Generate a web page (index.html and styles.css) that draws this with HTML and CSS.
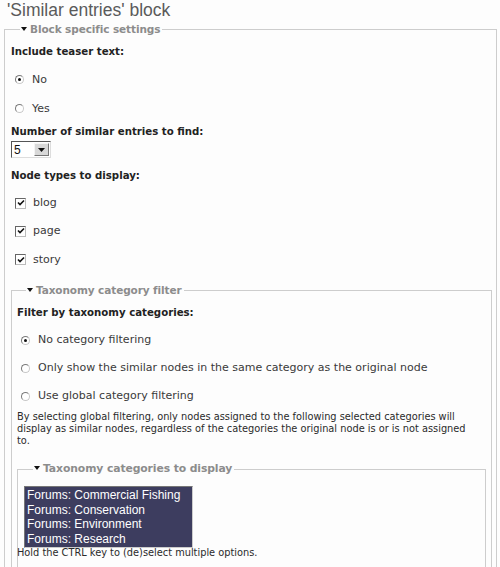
FILE: index.html
```html
<!DOCTYPE html>
<html>
<head>
<meta charset="utf-8">
<link rel="stylesheet" href="styles.css">
</head>
<body>
<h2 class="title">'Similar entries' block</h2>
<fieldset class="fs fs-outer">
  <legend class="lg"><svg class="tri" width="6" height="4" viewBox="0 0 6 4"><path d="M0 0H6L3 4Z" fill="#111"/></svg>Block specific settings</legend>
  <div class="label mt9">Include teaser text:</div>
  <div class="opts mt6">
    <div class="opt opt-tall"><span class="radio on"></span>No</div>
    <div class="opt opt-tall"><span class="radio"></span>Yes</div>
  </div>
  <div class="label mt2">Number of similar entries to find:</div>
  <div class="select mt2"><span class="sel-val">5</span><span class="sel-btn"><svg width="7" height="4" viewBox="0 0 7 4"><path d="M0 0H7L3.5 4Z" fill="#111"/></svg></span></div>
  <div class="label mt11">Node types to display:</div>
  <div class="opts mt6">
    <div class="opt"><span class="check"><svg width="8" height="8" viewBox="0 0 8 8"><path d="M1 3.5L3 5.5L7 1.5" fill="none" stroke="#111" stroke-width="1.6"/></svg></span>blog</div>
    <div class="opt"><span class="check"><svg width="8" height="8" viewBox="0 0 8 8"><path d="M1 3.5L3 5.5L7 1.5" fill="none" stroke="#111" stroke-width="1.6"/></svg></span>page</div>
    <div class="opt opt-tall"><span class="check"><svg width="8" height="8" viewBox="0 0 8 8"><path d="M1 3.5L3 5.5L7 1.5" fill="none" stroke="#111" stroke-width="1.6"/></svg></span>story</div>
  </div>

  <fieldset class="fs fs-inner">
    <legend class="lg"><svg class="tri" width="6" height="4" viewBox="0 0 6 4"><path d="M0 0H6L3 4Z" fill="#111"/></svg>Taxonomy category filter</legend>
    <div class="label mt9">Filter by taxonomy categories:</div>
    <div class="opts mt6">
      <div class="opt"><span class="radio on"></span>No category filtering</div>
      <div class="opt"><span class="radio"></span>Only show the similar nodes in the same category as the original node</div>
      <div class="opt"><span class="radio"></span>Use global category filtering</div>
    </div>
    <div class="desc">By selecting global filtering, only nodes assigned to the following selected categories will display as similar nodes, regardless of the categories the original node is or is not assigned to.</div>

    <fieldset class="fs fs-third">
      <legend class="lg lg-big"><svg class="tri" width="6" height="4" viewBox="0 0 6 4"><path d="M0 0H6L3 4Z" fill="#111"/></svg>Taxonomy categories to display</legend>
      <div class="listbox">
        <div class="lb-opt">Forums: Commercial Fishing</div>
        <div class="lb-opt">Forums: Conservation</div>
        <div class="lb-opt">Forums: Environment</div>
        <div class="lb-opt">Forums: Research</div>
      </div>
      <div class="hint">Hold the CTRL key to (de)select multiple options.</div>
    </fieldset>
  </fieldset>
</fieldset>
</body>
</html>
```
FILE: styles.css
```css
html, body {
  height: 567px;
  overflow: hidden;
}
body {
  margin: 0;
  padding: 0 3px 0 4px;
  background: #fdfdfd;
  font-family: "DejaVu Sans", Verdana, sans-serif;
  font-size: 10px;
  color: #333;
}
.title {
  margin: 0 0 2px 3px;
  font-family: "Liberation Sans", Arial, sans-serif;
  font-weight: normal;
  font-size: 17.5px;
  line-height: 20px;
  color: #5a5a5a;
}
.fs {
  margin: 0;
  border: 1px solid #cdcdcd;
  min-width: 0;
}
.fs-outer {
  padding: 0 4px 40px 6px;
}
.fs-inner {
  margin-top: 9px;
  padding: 0 5px 40px 5px;
}
.fs-third {
  margin-top: 15px;
  padding: 0 6px 40px 6px;
}
.lg {
  margin-left: 9px;
  padding: 0 2px 0 1px;
  font-weight: bold;
  font-size: 10.5px;
  line-height: 14px;
  color: #8c8c8c;
  letter-spacing: -0.1px;
}
.lg-big {
  font-size: 10.8px;
}
.tri {
  display: inline-block;
  margin-right: 3px;
  vertical-align: 2px;
}
.label {
  font-weight: bold;
  font-size: 10.2px;
  line-height: 14px;
  color: #222;
}
.mt2 { margin-top: 2px; }
.mt6 { margin-top: 6px; }
.mt9 { margin-top: 9px; }
.mt11 { margin-top: 11px; }
.opt {
  height: 28px;
  display: flex;
  align-items: center;
  padding-left: 4px;
  font-size: 11px;
  line-height: 14px;
  color: #3a3a3a;
  white-space: nowrap;
}
.opt-tall {
  height: 29px;
}
.radio {
  position: relative;
  box-sizing: border-box;
  width: 9px;
  height: 9px;
  margin-right: 8px;
  border-radius: 50%;
  border: 1px solid #7a7a7a;
  border-right-color: #c8c8c8;
  border-bottom-color: #c8c8c8;
  background: #fff;
  flex: none;
}
.radio.on::after {
  content: "";
  position: absolute;
  left: 2px;
  top: 2px;
  width: 3px;
  height: 3px;
  border-radius: 50%;
  background: #111;
}
.check {
  box-sizing: border-box;
  width: 11px;
  height: 11px;
  margin-right: 7px;
  border: 1px solid #666;
  border-right-color: #bbb;
  border-bottom-color: #bbb;
  background: #fff;
  display: flex;
  align-items: center;
  justify-content: center;
  flex: none;
}
.select {
  box-sizing: border-box;
  width: 40px;
  height: 17px;
  border: 1px solid #555;
  border-right-color: #ddd;
  border-bottom-color: #ddd;
  background: #fff;
  display: flex;
  align-items: center;
  justify-content: space-between;
  padding: 0 1px 0 2px;
}
.sel-val {
  font-family: "Liberation Sans", Arial, sans-serif;
  font-size: 12px;
  color: #111;
}
.sel-btn {
  box-sizing: border-box;
  width: 15px;
  height: 13px;
  background: #d8d8d8;
  border: 1px solid #f4f4f4;
  border-right-color: #777;
  border-bottom-color: #777;
  display: flex;
  align-items: center;
  justify-content: center;
}
.desc {
  margin-top: 1px;
  padding-right: 12px;
  font-size: 9.8px;
  line-height: 12px;
  color: #2a2a2a;
}
.listbox {
  box-sizing: border-box;
  width: 169px;
  margin-top: 10px;
  padding: 1px 0 1px 2px;
  background: #3d3d5f;
  border: 1px solid #777;
  border-right-color: #ccc;
  border-bottom-color: #ccc;
}
.lb-opt {
  font-family: "Liberation Sans", Arial, sans-serif;
  font-size: 12px;
  line-height: 14.5px;
  color: #fff;
}
.hint {
  margin: -1px 0 0 -7px;
  font-size: 9.8px;
  line-height: 12px;
  color: #2a2a2a;
}
```
